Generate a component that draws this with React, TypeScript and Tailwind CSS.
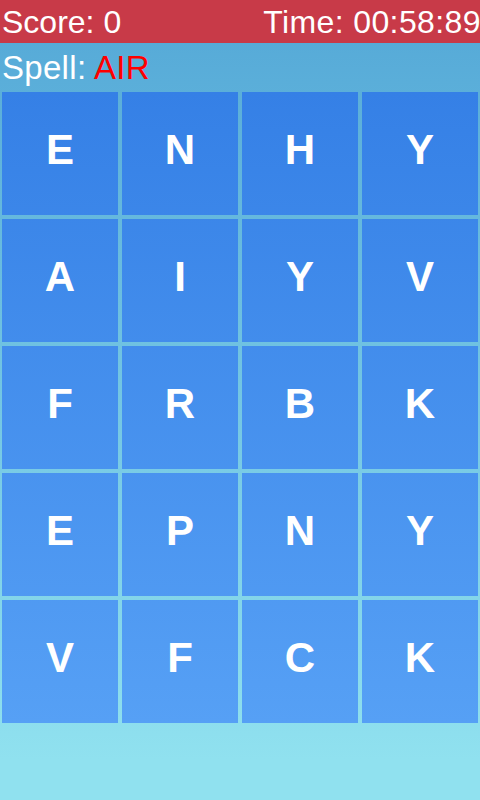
import React from "react";

const rows = [
  ["E", "N", "H", "Y"],
  ["A", "I", "Y", "V"],
  ["F", "R", "B", "K"],
  ["E", "P", "N", "Y"],
  ["V", "F", "C", "K"],
];

export default function App() {
  return (
    <div
      className="h-[800px] w-[480px] overflow-hidden bg-[linear-gradient(to_bottom,#57abd8_43px,#90e1ef_760px)] text-white"
      style={{ fontFamily: '"Liberation Sans", Arial, Helvetica, sans-serif' }}
    >
      <div className="flex h-[43px] items-start justify-between bg-[#c83a48] pl-[2px] text-[32px] leading-[44px] whitespace-nowrap">
        <span>Score: 0</span>
        <span className="-mr-px tracking-[0.4px]">Time: 00:58:89</span>
      </div>
      <div className="h-[49px] pl-[2px] text-[33px] leading-[50px] tracking-[0.3px] whitespace-nowrap">
        Spell: <span className="text-[#ff0000]">AIR</span>
      </div>
      <div className="grid grid-cols-4 gap-[4px] px-[2px]">
        {rows.flat().map((l, i) => (
          <div
            key={i}
            className="flex h-[123px] items-center justify-center bg-[linear-gradient(to_bottom,#3580e6_92px,#56a0f5_723px)] bg-fixed pb-[8px] text-[42px] font-bold"
          >
            {l}
          </div>
        ))}
      </div>
    </div>
  );
}
